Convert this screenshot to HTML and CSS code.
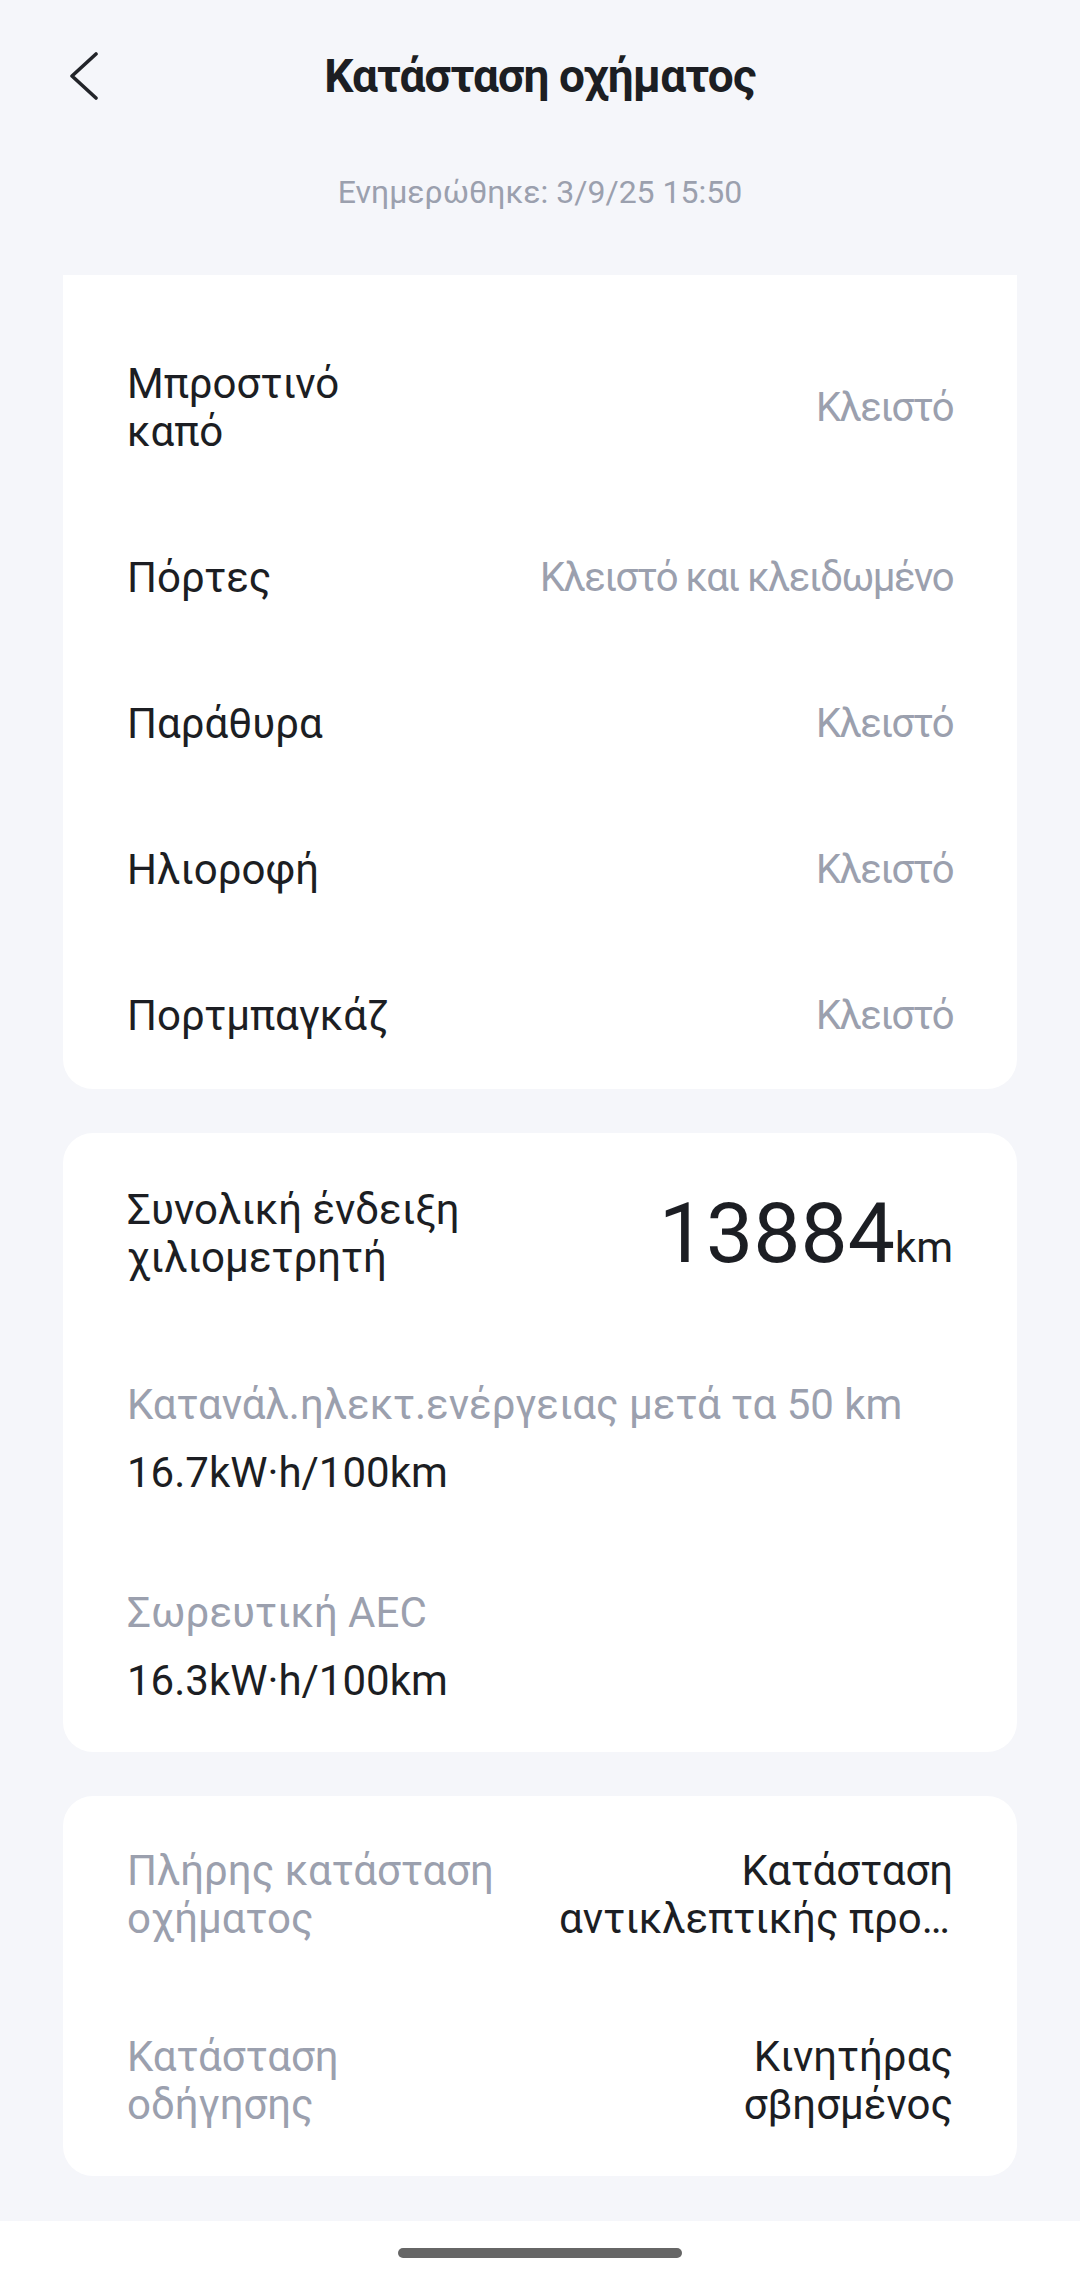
FILE: index.html
```html
<!DOCTYPE html>
<html lang="el">
<head>
    <meta charset="UTF-8">
    <meta name="viewport" content="width=device-width, initial-scale=1.0">
    <title>Κατάσταση οχήματος</title>
    <link rel="stylesheet" href="styles.css">
</head>
<body>

<div class="screen">

    <!-- Top bar -->
    <header class="top">
        <div class="nav">
            <a class="back" href="#">
                <svg width="30" height="50" viewBox="0 0 30 50">
                    <polyline points="26,3 2,25 26,47" fill="none" stroke="#222429" stroke-width="3.6" stroke-linecap="round" stroke-linejoin="round"/>
                </svg>
            </a>
            <h1>Κατάσταση οχήματος</h1>
            <span></span>
        </div>
        <p class="updated">Ενημερώθηκε: 3/9/25 15:50</p>
    </header>

    <main class="list">

        <!-- Openings -->
        <section class="card card-cut">
            <div class="row">
                <span class="label">Μπροστινό καπό</span>
                <span class="value">Κλειστό</span>
            </div>
            <div class="row">
                <span class="label">Πόρτες</span>
                <span class="value">Κλειστό και κλειδωμένο</span>
            </div>
            <div class="row">
                <span class="label">Παράθυρα</span>
                <span class="value">Κλειστό</span>
            </div>
            <div class="row">
                <span class="label">Ηλιοροφή</span>
                <span class="value">Κλειστό</span>
            </div>
            <div class="row">
                <span class="label">Πορτμπαγκάζ</span>
                <span class="value">Κλειστό</span>
            </div>
        </section>

        <!-- Mileage -->
        <section class="card odo">
            <div class="odo-row">
                <span class="odo-label">Συνολική ένδειξη χιλιομετρητή</span>
                <span class="odo-num">13884<small>km</small></span>
            </div>
            <div class="stat">
                <div class="stat-label">Κατανάλ.ηλεκτ.ενέργειας μετά τα 50 km</div>
                <div class="stat-value">16.7kW·h/100km</div>
            </div>
            <div class="stat stat-last">
                <div class="stat-label">Σωρευτική AEC</div>
                <div class="stat-value">16.3kW·h/100km</div>
            </div>
        </section>

        <!-- Status -->
        <section class="card pairs">
            <div class="pair">
                <div class="pair-label">Πλήρης κατάσταση οχήματος</div>
                <div class="pair-value">Κατάσταση<span class="clip">αντικλεπτικής προστασίας</span></div>
            </div>
            <div class="pair">
                <div class="pair-label">Κατάσταση οδήγησης</div>
                <div class="pair-value">Κινητήρας σβησμένος</div>
            </div>
        </section>

    </main>

    <div class="navbar"><span class="handle"></span></div>
</div>

</body>
</html>
```

FILE: styles.css
```css
body, html {
    margin: 0;
    height: 100%;
    overflow: hidden;
    background-color: #f5f6fa;
    font-family: Roboto, "Noto Sans", sans-serif;
    color: #1c1e23;
}

.screen {
    height: 2284px;
    display: flex;
    flex-direction: column;
}

/* Top bar */
.top {
    height: 275px;
    box-sizing: border-box;
}

.nav {
    height: 152px;
    display: grid;
    grid-template-columns: 1fr auto 1fr;
    align-items: center;
}

.back {
    padding-left: 70px;
    display: flex;
    align-items: center;
}

.nav h1 {
    margin: 0;
    font-size: 46px;
    font-weight: 700;
    letter-spacing: -0.9px;
}

.updated {
    margin: 20px 0 0;
    text-align: center;
    font-size: 32px;
    line-height: 40px;
    color: #9ba0ae;
}

/* Cards */
.list {
    display: flex;
    flex-direction: column;
    gap: 44px;
    padding: 0 63px 45px;
}

.card {
    background-color: #fff;
    border-radius: 30px;
    padding: 0 64px;
    font-size: 42px;
    line-height: 48px;
}

.card-cut {
    border-radius: 0 0 30px 30px;
    padding-top: 36px;
}

.row {
    display: flex;
    align-items: center;
    justify-content: space-between;
    padding: 49px 0;
}

.label {
    max-width: 280px;
}

.value {
    color: #9ba0ae;
    text-align: right;
    font-size: 40px;
    letter-spacing: -1.5px;
}

/* Mileage card */
.odo {
    padding-top: 53px;
    padding-bottom: 47px;
}

.odo-row {
    display: flex;
    align-items: center;
    justify-content: space-between;
    gap: 20px;
    height: 96px;
}

.odo-num {
    font-size: 84px;
    line-height: 1;
    white-space: nowrap;
}

.odo-num small {
    font-size: 42px;
    line-height: 1;
}

.stat {
    margin-top: 99px;
}

.stat-last {
    margin-top: 92px;
}

.stat-label {
    color: #9ba0ae;
}

.stat-value {
    margin-top: 20px;
}

/* Status card */
.pairs {
    padding-top: 51px;
    padding-bottom: 47px;
}

.pair {
    display: flex;
    justify-content: space-between;
    gap: 36px;
}

.pair + .pair {
    margin-top: 90px;
}

.pair-label {
    width: 380px;
    color: #9ba0ae;
}

.pair-value {
    width: 394px;
    text-align: right;
}

.clip {
    display: block;
    white-space: nowrap;
    overflow: hidden;
    text-overflow: ellipsis;
}

/* Gesture bar */
.navbar {
    flex: 1;
    background-color: #fff;
    display: flex;
    justify-content: center;
    padding-top: 27px;
}

.handle {
    width: 284px;
    height: 10px;
    border-radius: 5px;
    background-color: #666;
}
```
